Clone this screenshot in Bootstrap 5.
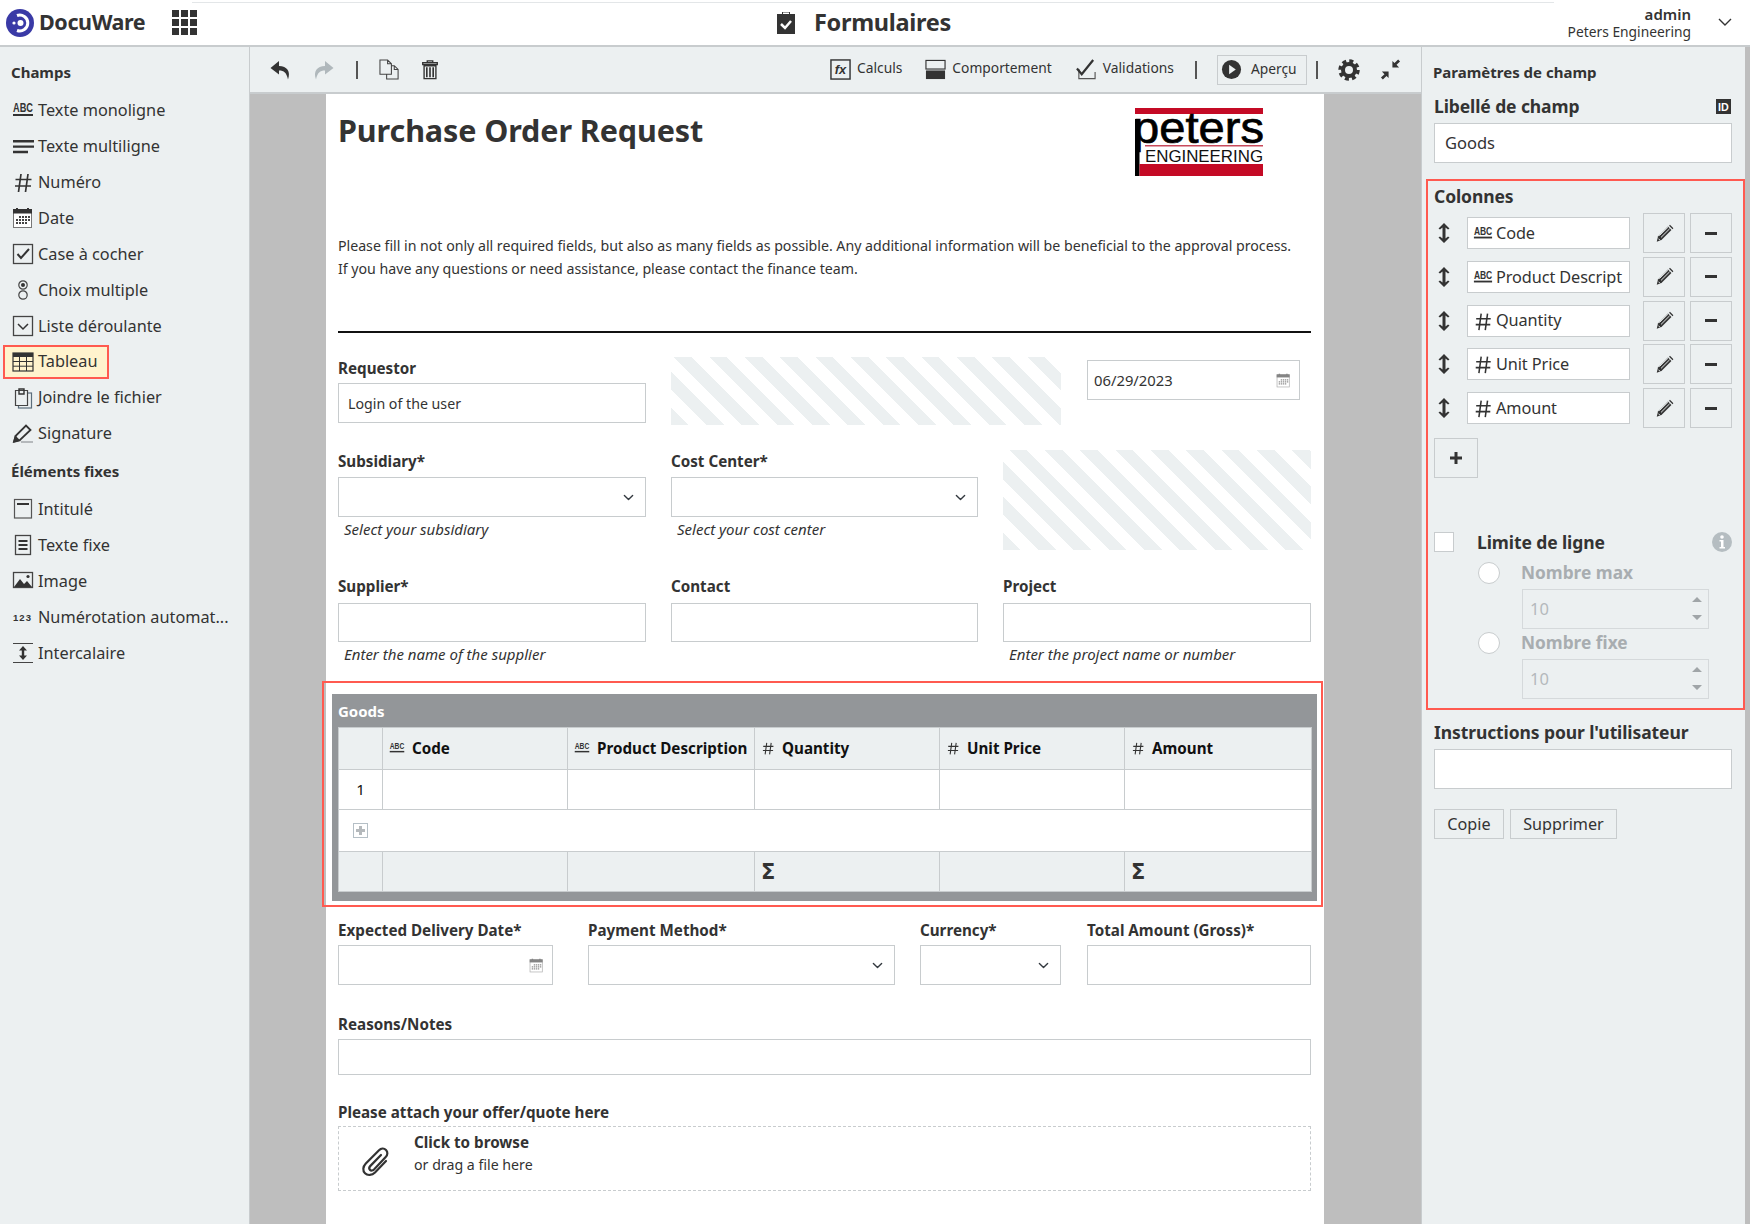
<!DOCTYPE html>
<html lang="fr">
<head>
<meta charset="utf-8">
<title>Formulaires</title>
<link href="https://cdn.jsdelivr.net/npm/bootstrap@5.3.0/dist/css/bootstrap.min.css" rel="stylesheet">
<style>
:root{--line:#c8ccce;--panel:#ecf0f1;--ink:#333;--red:#ff5a50;}
html,body{height:100%;}
body{font-family:"Noto Sans","Open Sans",sans-serif;color:var(--ink);overflow:hidden;display:flex;flex-direction:column;background:#bebebe;}
.ic{display:block;flex:none;}
/* header */
.top{height:47px;flex:none;background:linear-gradient(#e3e6e8,#e3e6e8) 192px 2px/1362px 1px no-repeat #fff;border-bottom:2px solid var(--line);}
.brand{font-weight:700;font-size:21.5px;letter-spacing:-.4px;margin-left:5px;width:133px;}
.page-title{font-size:23.5px;font-weight:700;letter-spacing:-.3px;margin-left:19px;}
.user{font-size:13.8px;line-height:18px;text-align:right;margin-right:27px;}
.user b{font-weight:600;display:block;font-size:15px;}
/* side */
.side{width:250px;flex:none;background:var(--panel);border-right:1px solid var(--line);}
.side-h{font-size:15px;font-weight:700;padding-left:11px;}
.side-h.a{height:45.5px;padding-top:14px;}
.side-h.b{height:40px;padding-top:9px;}
.fi{height:35.9px;padding-left:12px;font-size:16.3px;}
.fi .ic{margin-right:4px;}
.fi.mark{height:34px;margin:.95px 0;margin-left:3px;width:106px;border:2px solid var(--red);padding-left:7px;}
/* toolbar */
.tools{height:47px;flex:none;background:var(--panel);border-bottom:2px solid var(--line);padding-left:20px;font-size:13.8px;}
.sep{width:2px;height:18px;background:#555;flex:none;}
.tl{margin:0 0 2px 6px;}
.pv{height:30px;width:90px;border:1px solid var(--line);padding-left:3px;}
.canvas{background:#bebebe;min-height:0;overflow:hidden;}
.paper{width:998px;margin-left:76px;background:#fff;height:100%;padding:0 13px 0 12px;font-size:14.2px;}
.f-head{height:141px;padding-top:14px;}
.f-title{font-size:30.5px;font-weight:700;line-height:36px;margin-top:4px;letter-spacing:-.1px;}
.logo{margin-right:47px;overflow:visible;}
.intro{line-height:22.5px;margin:0;letter-spacing:-.02px;white-space:nowrap;}
.rule{height:2px;background:#111;margin:51px 0 24px;}
.lbl{font-weight:700;font-size:15.2px;line-height:20px;padding-top:1px;margin-bottom:5px;white-space:nowrap;}
.fc{border-radius:0;border:1px solid var(--line);height:40px;padding:0 9px;font-size:14.2px;color:var(--ink);background-color:#fff;}
.form-select.fc{background-size:15px 11px;background-position:right 9px center;}
.hint{font-style:italic;font-size:15px;line-height:20px;margin-top:2px;padding-left:6px;}
.hatch{background:repeating-linear-gradient(45deg,var(--panel) 0 12.5px,#fff 12.5px 25px);}
.c1{width:308px;flex:none;}
.c2{width:307px;flex:none;margin-left:25px;}
.c3{width:308px;flex:none;margin-left:25px;}
.h1b{width:390px;height:68px;flex:none;margin-left:25px;}
.date{width:213px;margin:3px 0 0 26px;flex:none;padding-left:6px;font-size:14.8px;}
.cal-g{opacity:.6;}
.fc.d-flex{padding-right:8px;}
.row2{margin-top:25px;}
.pad1 .lbl{padding-top:1px;margin-bottom:6px;}
.h2b{height:100px;}
.row3{margin-top:28px;}
.row3 .lbl{padding-top:0;margin-bottom:7px;margin-top:-2px;}
.row3 .fc{height:39px;margin-top:1px;}
/* goods */
.goods-mark{border:2px solid var(--red);margin:17px -12px 0 -16px;padding:11px 4px 4px 8px;}
.goods{background:#939699;padding:0 6px 9px;}
.goods-t{height:33px;line-height:34px;color:#fff;font-weight:700;font-size:15px;}
.gt{table-layout:fixed;width:973px;margin:0;border-collapse:collapse;border:1px solid var(--line);}
.gt td,.gt th{border:1px solid var(--line);padding:0 0 0 6px;background:#fff;color:#111;box-shadow:none;vertical-align:middle;font-size:15.2px;}
.gt tr.g th,.gt tr.g td{background:var(--panel);}
.gt th{font-weight:700;white-space:nowrap;}
.thc{gap:7px;}
.sigma{font-size:21px;font-weight:900;font-family:"DejaVu Sans",sans-serif;color:#333;line-height:1;display:block;padding-top:2px;}
.w1{width:215px;flex:none;}.w2{width:307px;margin-left:35px;flex:none;}.w3{width:141px;margin-left:25px;flex:none;}.w4{width:224px;margin-left:26px;flex:none;}
.row4{margin-top:12px;}
.row5{margin-top:28px;}
.row5 .fc{height:36px;}
.row6{margin-top:26px;}
.row6 .lbl{margin-bottom:4px;}
.drop{height:65px;border:1px dashed var(--line);padding-left:20px;line-height:22.5px;}
.drop b{font-weight:700;font-size:15.2px;display:block;}
.drop .ic{margin:8px 21px 0 0;}
.drop-t{padding-bottom:10px;}
/* props */
.props{width:329px;flex:none;background:linear-gradient(90deg,var(--line) 0 1px,var(--panel) 1px 324px,#bebebe 324px);padding:15px 18px 0 13px;}
.p-h{font-size:15px;font-weight:700;line-height:20px;margin:0 0 12px -1px;}
.p-l{font-size:17.5px;font-weight:700;line-height:24px;letter-spacing:-.1px;white-space:nowrap;}
.p-in{background:#fff;border:1px solid var(--line);font-size:16.5px;}
.p-mark{border:2px solid var(--red);margin:16px -13px 0 -8px;padding:3px 11px 9px 6px;}
.p-r{height:40px;margin-bottom:3.75px;}
.p-f{width:163px;height:32px;margin-left:12px;padding-left:5px;font-size:16.3px;gap:3px;white-space:nowrap;overflow:hidden;letter-spacing:-.1px;}
.sq{width:42px;height:40px;border:1px solid var(--line);flex:none;}
.ck{width:20px;height:20px;background:#fff;border:1px solid var(--line);flex:none;}
.rd{width:22px;height:22px;background:#fff;border:1px solid var(--line);border-radius:50%;flex:none;}
.dis{color:#a8adb0;font-weight:700;font-size:17.3px;margin-left:21px;line-height:22px;}
.spin{width:187px;height:40px;margin:5px 0 3px 88px;border:1px solid #d5d9db;color:#b4b9bc;font-size:16.5px;padding:0 6px 0 7px;}
.pbtn{height:30px;border:1px solid var(--line);background:transparent;font-size:16.2px;padding:0;color:var(--ink);border-radius:0;}
</style>
</head>
<body>
<svg width="0" height="0" class="position-absolute">
<defs>
<symbol id="abc" viewBox="0 0 22 22"><text x="1" y="13" font-size="12" font-weight="700" font-family="Liberation Sans" textLength="20" lengthAdjust="spacingAndGlyphs" fill="#333">ABC</text><rect x="1" y="15" width="20" height="2" fill="#333"/></symbol>
<symbol id="lines" viewBox="0 0 22 22"><path d="M1 5h21v2.4H1zM1 10.4h21v2.4H1zM1 15.8h15v2.4H1z" fill="#333"/></symbol>
<symbol id="hash" viewBox="0 0 22 22"><path d="M9 3 6.5 21M16 3l-2.500 18M3.500 8.500h16M3 15h16" stroke="#333" stroke-width="1.700" fill="none"/></symbol>
<symbol id="cal" viewBox="0 0 22 22"><rect x="1.500" y="2.500" width="18" height="18" fill="#fff" stroke="#777"/><rect x="1" y="2" width="19" height="4.500" fill="#333"/><path d="M4 1h2v2H4zM15 1h2v2h-2z" fill="#333"/><g fill="#444"><path d="M7 9h2v2H7zM10 9h2v2h-2zM13 9h2v2h-2zM16 9h2v2h-2zM4 12h2v2H4zM7 12h2v2H7zM10 12h2v2h-2zM13 12h2v2h-2zM16 12h2v2h-2zM4 15h2v2H4zM7 15h2v2H7zM10 15h2v2h-2zM13 15h2v2h-2z"/></g></symbol>
<symbol id="chk" viewBox="0 0 22 22"><rect x="1.500" y="1.500" width="19" height="19" fill="none" stroke="#444" stroke-width="1.300"/><path d="M5.500 11l3.500 4 8-9" fill="none" stroke="#333" stroke-width="2"/></symbol>
<symbol id="rad" viewBox="0 0 22 22"><circle cx="11" cy="6" r="4.200" fill="none" stroke="#444" stroke-width="1.200"/><circle cx="11" cy="6" r="2" fill="#333"/><circle cx="11" cy="16" r="4.200" fill="none" stroke="#444" stroke-width="1.200"/></symbol>
<symbol id="ddl" viewBox="0 0 22 22"><rect x="1.500" y="1.500" width="19" height="19" fill="none" stroke="#444" stroke-width="1.300"/><path d="M6 9l5 5 5-5" fill="none" stroke="#333" stroke-width="1.500"/></symbol>
<symbol id="tbl" viewBox="0 0 22 22"><rect x="1" y="2" width="20" height="18" fill="none" stroke="#333" stroke-width="1.200"/><rect x="1" y="2" width="20" height="4" fill="#333"/><path d="M7.500 6v14M14.500 6v14M1 10.500h20M1 15.200h20" stroke="#333" stroke-width="1"/></symbol>
<symbol id="att" viewBox="0 0 22 22"><rect x="6.500" y="6" width="13" height="15" fill="none" stroke="#5b6d7c" stroke-width="1.200"/><path d="M3.500 3.500h12v15h-12z" fill="#ecf0f1" stroke="#444" stroke-width="1.200"/><path d="M7 2h5v5H7z" fill="none" stroke="#333" stroke-width="1.400"/></symbol>
<symbol id="sig" viewBox="0 0 22 22"><path d="M2 19.500l2-6L14 3.500l4.500 4.500L8 18z" fill="#ecf0f1" stroke="#333" stroke-width="1.800"/><path d="M1 21l1.800-8 6 6z" fill="#333"/><rect x="9" y="19" width="12" height="2" fill="#b5b9bc"/></symbol>
<symbol id="ttl" viewBox="0 0 22 22"><rect x="2.500" y="1.500" width="17" height="18.500" fill="none" stroke="#555" stroke-width="1.200"/><rect x="5" y="5" width="12" height="2" fill="#333"/></symbol>
<symbol id="txt" viewBox="0 0 22 22"><rect x="3.500" y="1.500" width="15" height="19" fill="none" stroke="#444" stroke-width="1.300"/><path d="M6.500 6h9v2h-9zM6.500 10h9v2h-9zM6.500 14h9v2h-9z" fill="#333"/></symbol>
<symbol id="img" viewBox="0 0 22 22"><rect x="1.500" y="2.500" width="19" height="15" fill="none" stroke="#444" stroke-width="1.300"/><path d="M2 17l6-8 4 5 3-3 5 6z" fill="#333"/><circle cx="16" cy="6.500" r="1.600" fill="#333"/></symbol>
<symbol id="num" viewBox="0 0 22 22"><text x="1" y="15" font-size="9.500" font-weight="700" font-family="Liberation Sans" textLength="18" fill="#333">123</text></symbol>
<symbol id="gap" viewBox="0 0 22 22"><path d="M1 1.500h20M1 20.500h20" stroke="#444" stroke-width="1.200"/><path d="M11 4l4 4.500h-2.800v5H15l-4 4.500-4-4.500h2.800v-5H7z" fill="#333"/></symbol>
<symbol id="undo" viewBox="0 0 22 22"><path d="M9 2 .5 9 9 15.500V11.500c5 0 7.500 2 9 9 3-8-1-13.500-9-13.500z"/></symbol>
<symbol id="copy" viewBox="0 0 22 22"><path d="M1 1h8l4 4v11H1zM9 1v4h4M13 7h3l4 4v10H8v-5M16 7v4h4" fill="none" stroke="#444" stroke-width="1.100"/></symbol>
<symbol id="trash" viewBox="0 0 22 22"><path d="M8 3V1.500h6V3M3 3.500h16v2H3zM4.500 7h13v14h-13z" fill="none" stroke="#333" stroke-width="1.500"/><path d="M7.500 8.500v11M11 8.500v11M14.500 8.500v11" stroke="#333" stroke-width="1.800"/></symbol>
<symbol id="fx" viewBox="0 0 22 22"><rect x="1" y="1" width="20" height="20" fill="none" stroke="#333" stroke-width="1.500"/><text x="5" y="16" font-size="13.500" font-weight="700" font-style="italic" font-family="Liberation Sans" textLength="12" fill="#333">fx</text></symbol>
<symbol id="beh" viewBox="0 0 22 22"><rect x="1" y="1.500" width="20" height="9" fill="none" stroke="#333" stroke-width="1.200"/><rect x="1" y="12" width="20" height="9" fill="#333"/></symbol>
<symbol id="val" viewBox="0 0 22 22"><path d="M3 10.500v10h17v-7" fill="none" stroke="#555" stroke-width="1.200"/><path d="M1 10l5 6L18 1" fill="none" stroke="#333" stroke-width="2.300"/></symbol>
<symbol id="play" viewBox="0 0 22 22"><circle cx="11" cy="11" r="10" fill="#333"/><path d="M8.500 6l7 5-7 5z" fill="#ecf0f1"/></symbol>
<symbol id="gear" viewBox="0 0 22 22"><circle cx="11" cy="11" r="6" fill="none" stroke="#333" stroke-width="4"/><circle cx="11" cy="11" r="9" fill="none" stroke="#333" stroke-width="3.500" stroke-dasharray="4 3.070"/></symbol>
<symbol id="shrink" viewBox="0 0 22 22"><path d="M13 9V2l2.200 2.200L19 .5l2 2L17.300 6 20 9zM9 13v7l-2.200-2.200L3 21.500l-2-2L4.700 16 2 13z" fill="#333"/></symbol>
<symbol id="pen" viewBox="0 0 22 22"><path d="M2 20.500l1.500-6L15 3l4 4L7.500 18.500z" fill="#333"/><path d="M5 13.500 15 3.800M7 15.500 17 5.500M4 17l2 2" stroke="#ecf0f1" stroke-width="1.100"/><path d="M16.300 2l4 4 1-1-4-4z" fill="#333"/></symbol>
<symbol id="updown" viewBox="0 0 22 22"><path d="M11 1l5.500 5.500-1.500 1L12.500 5.500v11l2.500-2 1.500 1L11 21 5.500 15.500l1.500-1 2.500 2v-11L7 7.500l-1.500-1z" fill="#333"/></symbol>
</defs>
</svg>

<header class="top d-flex align-items-center flex-none">
  <svg class="ic" style="margin-left:6px" width="28" height="28" viewBox="0 0 28 28"><circle cx="14" cy="14" r="14" fill="#3a3aa6"/><path d="M11 6.500a8 8 0 1 1 0 15" fill="none" stroke="#fff" stroke-width="3"/><circle cx="14.500" cy="14" r="3" fill="#fff"/><circle cx="8" cy="14" r="1.600" fill="#fff"/></svg>
  <div class="brand">DocuWare</div>
  <svg class="ic" width="25" height="25" viewBox="0 0 25 25" fill="#333"><path d="M0 0h7v7H0zM9 0h7v7H9zM18 0h7v7h-7zM0 9h7v7H0zM9 9h7v7H9zM18 9h7v7h-7zM0 18h7v7H0zM9 18h7v7H9zM18 18h7v7h-7z"/></svg>
  <svg class="ic" style="margin-left:580px" width="18" height="23" viewBox="0 0 18 23"><path d="M0 3h5V1h8v2h5v20H0z" fill="#333"/><path d="M4 13l4 4 6-7" fill="none" stroke="#fff" stroke-width="2.500"/><rect x="6" y="1.500" width="6" height="1.500" fill="#fff"/></svg>
  <div class="page-title">Formulaires</div>
  <div class="user ms-auto"><b>admin</b>Peters Engineering</div>
  <svg class="ic" style="margin-right:18px" width="14" height="9" viewBox="0 0 14 9"><path d="M1 1l6 6 6-6" fill="none" stroke="#333" stroke-width="1.400"/></svg>
</header>

<div class="d-flex flex-grow-1" style="min-height:0">
  <aside class="side">
    <div class="side-h a">Champs</div>
    <div class="fi d-flex align-items-center"><svg class="ic" width="22" height="22"><use href="#abc"/></svg>Texte monoligne</div>
    <div class="fi d-flex align-items-center"><svg class="ic" width="22" height="22"><use href="#lines"/></svg>Texte multiligne</div>
    <div class="fi d-flex align-items-center"><svg class="ic" width="22" height="22"><use href="#hash"/></svg>Numéro</div>
    <div class="fi d-flex align-items-center"><svg class="ic" width="22" height="22"><use href="#cal"/></svg>Date</div>
    <div class="fi d-flex align-items-center"><svg class="ic" width="22" height="22"><use href="#chk"/></svg>Case à cocher</div>
    <div class="fi d-flex align-items-center"><svg class="ic" width="22" height="22"><use href="#rad"/></svg>Choix multiple</div>
    <div class="fi d-flex align-items-center"><svg class="ic" width="22" height="22"><use href="#ddl"/></svg>Liste déroulante</div>
    <div class="fi mark d-flex align-items-center"><svg class="ic" width="22" height="22"><use href="#tbl"/></svg>Tableau</div>
    <div class="fi d-flex align-items-center"><svg class="ic" width="22" height="22"><use href="#att"/></svg>Joindre le fichier</div>
    <div class="fi d-flex align-items-center"><svg class="ic" width="22" height="22"><use href="#sig"/></svg>Signature</div>
    <div class="side-h b">Éléments fixes</div>
    <div class="fi d-flex align-items-center"><svg class="ic" width="22" height="22"><use href="#ttl"/></svg>Intitulé</div>
    <div class="fi d-flex align-items-center"><svg class="ic" width="22" height="22"><use href="#txt"/></svg>Texte fixe</div>
    <div class="fi d-flex align-items-center"><svg class="ic" width="22" height="22"><use href="#img"/></svg>Image</div>
    <div class="fi d-flex align-items-center"><svg class="ic" width="22" height="22"><use href="#num"/></svg>Numérotation automat...</div>
    <div class="fi d-flex align-items-center"><svg class="ic" width="22" height="22"><use href="#gap"/></svg>Intercalaire</div>
  </aside>

  <main class="d-flex flex-column flex-grow-1" style="min-width:0">
    <div class="tools d-flex align-items-center">
      <svg class="ic" width="22" height="22" fill="#333"><use href="#undo"/></svg>
      <svg class="ic" style="margin-left:20px;transform:scaleX(-1)" width="22" height="22" fill="#b0b8bc"><use href="#undo"/></svg>
      <span class="sep" style="margin-left:22px"></span>
      <svg class="ic" style="margin-left:21px" width="21" height="21"><use href="#copy"/></svg>
      <svg class="ic" style="margin-left:20px" width="20" height="21"><use href="#trash"/></svg>
      <svg class="ic" style="margin-left:390px" width="21" height="21"><use href="#fx"/></svg><span class="tl">Calculs</span>
      <svg class="ic" style="margin-left:23px" width="21" height="21"><use href="#beh"/></svg><span class="tl">Comportement</span>
      <svg class="ic" style="margin-left:24px" width="21" height="21"><use href="#val"/></svg><span class="tl">Validations</span>
      <span class="sep" style="margin-left:21px"></span>
      <div class="pv d-flex align-items-center" style="margin-left:20px"><svg class="ic" width="21" height="21"><use href="#play"/></svg><span style="margin-left:9px">Aperçu</span></div>
      <span class="sep" style="margin-left:9px"></span>
      <svg class="ic" style="margin-left:20px" width="22" height="22"><use href="#gear"/></svg>
      <svg class="ic" style="margin-left:20px" width="21" height="21"><use href="#shrink"/></svg>
    </div>
    <div class="canvas flex-grow-1">
      <div class="paper">
        <div class="f-head d-flex justify-content-between">
          <div class="f-title">Purchase Order Request</div>
          <svg class="logo ic" width="129" height="68" viewBox="0 0 129 68">
            <rect width="128" height="6" fill="#c40a25"/>
            <rect y="11" width="4.500" height="57" fill="#000"/>
            <rect x="10" y="37" width="118" height="1.500" fill="#c84a5c"/>
            <rect x="4.500" y="56" width="123.500" height="12" fill="#c40a25"/>
            <text x="-2" y="35" font-size="45" font-family="Liberation Sans" textLength="131" lengthAdjust="spacingAndGlyphs" stroke="#000" stroke-width=".7" fill="#000">peters</text>
            <text x="10" y="54" font-size="16.500" font-family="Liberation Sans" textLength="118" lengthAdjust="spacingAndGlyphs" fill="#111">ENGINEERING</text>
          </svg>
        </div>
        <p class="intro">Please fill in not only all required fields, but also as many fields as possible. Any additional information will be beneficial to the approval process.<br>If you have any questions or need assistance, please contact the finance team.</p>
        <div class="rule"></div>

        <div class="d-flex">
          <div class="c1"><div class="lbl">Requestor</div><input class="form-control fc" value="Login of the user"></div>
          <div class="h1b hatch"></div>
          <div class="date fc d-flex align-items-center justify-content-between"><span>06/29/2023</span><svg class="ic cal-g" width="15" height="15"><use href="#cal"/></svg></div>
        </div>

        <div class="d-flex row2">
          <div class="c1 pad1"><div class="lbl">Subsidiary*</div><select class="form-select fc"></select><div class="hint">Select your subsidiary</div></div>
          <div class="c2 pad1"><div class="lbl">Cost Center*</div><select class="form-select fc"></select><div class="hint">Select your cost center</div></div>
          <div class="c3 h2b hatch"></div>
        </div>

        <div class="d-flex row3">
          <div class="c1"><div class="lbl">Supplier*</div><input class="form-control fc"><div class="hint">Enter the name of the supplier</div></div>
          <div class="c2"><div class="lbl">Contact</div><input class="form-control fc"></div>
          <div class="c3"><div class="lbl">Project</div><input class="form-control fc"><div class="hint">Enter the project name or number</div></div>
        </div>

        <div class="goods-mark">
          <div class="goods">
            <div class="goods-t">Goods</div>
            <table class="table gt">
              <colgroup><col style="width:44px"><col style="width:185px"><col style="width:187px"><col style="width:185px"><col style="width:185px"><col style="width:187px"></colgroup>
              <tr class="g" style="height:42px">
                <th></th>
                <th><div class="d-flex align-items-center thc"><svg class="ic" width="16" height="16"><use href="#abc"/></svg>Code</div></th>
                <th><div class="d-flex align-items-center thc"><svg class="ic" width="16" height="16"><use href="#abc"/></svg>Product Description</div></th>
                <th><div class="d-flex align-items-center thc"><svg class="ic" width="14" height="16"><use href="#hash"/></svg>Quantity</div></th>
                <th><div class="d-flex align-items-center thc"><svg class="ic" width="14" height="16"><use href="#hash"/></svg>Unit Price</div></th>
                <th><div class="d-flex align-items-center thc"><svg class="ic" width="14" height="16"><use href="#hash"/></svg>Amount</div></th>
              </tr>
              <tr style="height:40px"><td class="text-center" style="padding:0">1</td><td></td><td></td><td></td><td></td><td></td></tr>
              <tr style="height:42px"><td colspan="6" style="padding-left:14px"><svg class="ic" width="15" height="15" viewBox="0 0 15 15"><rect x=".5" y=".5" width="14" height="14" fill="#fff" stroke="#b5bfc6"/><path d="M6 3h3v3h3v3H9v3H6V9H3V6h3z" fill="#b5b9bc"/></svg></td></tr>
              <tr class="g" style="height:40px"><td></td><td></td><td></td><td><span class="sigma">Σ</span></td><td></td><td><span class="sigma">Σ</span></td></tr>
            </table>
          </div>
        </div>

        <div class="d-flex row4">
          <div class="w1"><div class="lbl">Expected Delivery Date*</div><div class="fc d-flex align-items-center justify-content-end"><svg class="ic cal-g" width="15" height="15"><use href="#cal"/></svg></div></div>
          <div class="w2"><div class="lbl">Payment Method*</div><select class="form-select fc"></select></div>
          <div class="w3"><div class="lbl">Currency*</div><select class="form-select fc"></select></div>
          <div class="w4"><div class="lbl">Total Amount (Gross)*</div><input class="form-control fc"></div>
        </div>
        <div class="row5"><div class="lbl">Reasons/Notes</div><input class="form-control fc"></div>
        <div class="row6"><div class="lbl">Please attach your offer/quote here</div>
          <div class="drop d-flex align-items-center">
            <svg class="ic" width="34" height="34" viewBox="0 0 34 34"><path d="M27 15 16 26.500c-3 3-7.500 3.300-10 .8s-2.200-6.700.8-9.800L20 4.300c2-2 5-2.300 7-.3s1.700 5-.3 7L15 23.500c-1.200 1.200-3 1.400-4 .4s-.8-2.800.4-4L22 9" fill="none" stroke="#333" stroke-width="2.200" stroke-linecap="round"/></svg>
            <div class="drop-t"><b>Click to browse</b>or drag a file here</div>
          </div>
        </div>
      </div>
    </div>
  </main>

  <aside class="props">
    <div class="p-h">Paramètres de champ</div>
    <div class="d-flex align-items-center justify-content-between"><div class="p-l">Libellé de champ</div><svg class="ic" style="margin-right:1px" width="15" height="15" viewBox="0 0 14 14"><rect width="14" height="14" fill="#333"/><text x="1.800" y="11" font-size="10" font-weight="700" font-family="Liberation Sans" fill="#fff">ID</text></svg></div>
    <div class="p-in d-flex align-items-center" style="height:40px;margin-top:5px;padding-left:10px">Goods</div>

    <div class="p-mark">
      <div class="p-l" style="margin-bottom:5px">Colonnes</div>
      <div class="p-r d-flex align-items-center"><svg class="ic" style="margin-left:-1px" width="22" height="22"><use href="#updown"/></svg><div class="p-f p-in d-flex align-items-center"><svg class="ic" width="20" height="20"><use href="#abc"/></svg>Code</div><div class="sq d-flex align-items-center justify-content-center ms-auto"><svg class="ic" width="19" height="19"><use href="#pen"/></svg></div><div class="sq d-flex align-items-center justify-content-center" style="margin-left:5px"><svg class="ic" width="12" height="3"><rect width="12" height="3" fill="#333"/></svg></div></div>
      <div class="p-r d-flex align-items-center"><svg class="ic" style="margin-left:-1px" width="22" height="22"><use href="#updown"/></svg><div class="p-f p-in d-flex align-items-center"><svg class="ic" width="20" height="20"><use href="#abc"/></svg>Product Descript</div><div class="sq d-flex align-items-center justify-content-center ms-auto"><svg class="ic" width="19" height="19"><use href="#pen"/></svg></div><div class="sq d-flex align-items-center justify-content-center" style="margin-left:5px"><svg class="ic" width="12" height="3"><rect width="12" height="3" fill="#333"/></svg></div></div>
      <div class="p-r d-flex align-items-center"><svg class="ic" style="margin-left:-1px" width="22" height="22"><use href="#updown"/></svg><div class="p-f p-in d-flex align-items-center"><svg class="ic" width="20" height="20"><use href="#hash"/></svg>Quantity</div><div class="sq d-flex align-items-center justify-content-center ms-auto"><svg class="ic" width="19" height="19"><use href="#pen"/></svg></div><div class="sq d-flex align-items-center justify-content-center" style="margin-left:5px"><svg class="ic" width="12" height="3"><rect width="12" height="3" fill="#333"/></svg></div></div>
      <div class="p-r d-flex align-items-center"><svg class="ic" style="margin-left:-1px" width="22" height="22"><use href="#updown"/></svg><div class="p-f p-in d-flex align-items-center"><svg class="ic" width="20" height="20"><use href="#hash"/></svg>Unit Price</div><div class="sq d-flex align-items-center justify-content-center ms-auto"><svg class="ic" width="19" height="19"><use href="#pen"/></svg></div><div class="sq d-flex align-items-center justify-content-center" style="margin-left:5px"><svg class="ic" width="12" height="3"><rect width="12" height="3" fill="#333"/></svg></div></div>
      <div class="p-r d-flex align-items-center"><svg class="ic" style="margin-left:-1px" width="22" height="22"><use href="#updown"/></svg><div class="p-f p-in d-flex align-items-center"><svg class="ic" width="20" height="20"><use href="#hash"/></svg>Amount</div><div class="sq d-flex align-items-center justify-content-center ms-auto"><svg class="ic" width="19" height="19"><use href="#pen"/></svg></div><div class="sq d-flex align-items-center justify-content-center" style="margin-left:5px"><svg class="ic" width="12" height="3"><rect width="12" height="3" fill="#333"/></svg></div></div>
      <div class="sq d-flex align-items-center justify-content-center" style="width:44px;margin-top:10px"><svg class="ic" width="14" height="14" viewBox="0 0 14 14"><path d="M5.500 1h3v4.500H13v3H8.500V13h-3V8.500H1v-3h4.500z" fill="#333"/></svg></div>

      <div class="d-flex align-items-center" style="margin-top:52px">
        <div class="ck"></div><div class="p-l" style="margin-left:23px">Limite de ligne</div>
        <svg class="ic ms-auto" width="20" height="20" viewBox="0 0 20 20"><circle cx="10" cy="10" r="10" fill="#b5bdc1"/><circle cx="10" cy="5" r="1.800" fill="#fff"/><path d="M7.500 8h4v7h1.500v1.500H7.500V15H9V9.500H7.500z" fill="#fff"/></svg>
      </div>
      <div class="d-flex align-items-center" style="margin:8px 0 0 44px"><div class="rd"></div><div class="dis">Nombre max</div></div>
      <div class="spin d-flex align-items-center justify-content-between"><span>10</span><svg class="ic" width="10" height="24" viewBox="0 0 10 24"><path d="M0 5l5-5 5 5zM0 18h10l-5 5z" fill="#a0a5a8"/></svg></div>
      <div class="d-flex align-items-center" style="margin-left:44px"><div class="rd"></div><div class="dis">Nombre fixe</div></div>
      <div class="spin d-flex align-items-center justify-content-between mb-0"><span>10</span><svg class="ic" width="10" height="24" viewBox="0 0 10 24"><path d="M0 5l5-5 5 5zM0 18h10l-5 5z" fill="#a0a5a8"/></svg></div>
    </div>

    <div class="p-l" style="margin-top:10px">Instructions pour l'utilisateur</div>
    <div class="p-in" style="height:40px;margin-top:5px"></div>
    <div class="d-flex" style="gap:6px;margin-top:20px">
      <button class="btn pbtn" style="width:70px">Copie</button>
      <button class="btn pbtn" style="width:107px">Supprimer</button>
    </div>
  </aside>
</div>
<script src="https://cdn.jsdelivr.net/npm/bootstrap@5.3.0/dist/js/bootstrap.bundle.min.js"></script>
</body>
</html>
